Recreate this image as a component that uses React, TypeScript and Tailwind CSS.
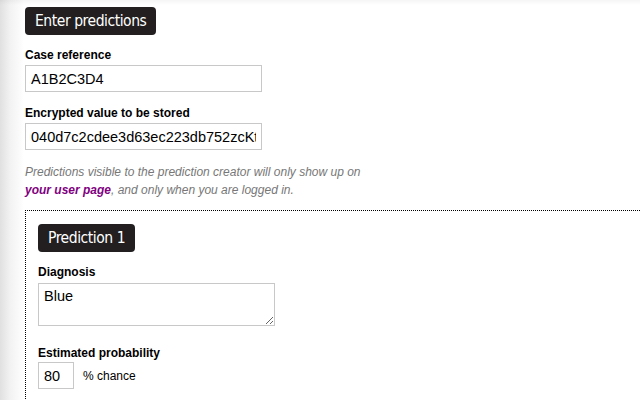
const body = { fontFamily: '"Liberation Sans", Arial, sans-serif' };
const head = { fontFamily: '"Trebuchet MS", "DejaVu Sans Condensed", "Liberation Sans Narrow", sans-serif' };

function Heading({ children }: { children: React.ReactNode }) {
    return (
        <div style={head} className="inline-flex h-[28px] items-center rounded-[4px] bg-[#231f20] px-[10px] pt-[1px] text-[15.5px] tracking-[-0.45px] text-white">
            {children}
        </div>
    );
}

function Label({ children }: { children: React.ReactNode }) {
    return <div className="text-[12px] font-bold leading-[14px] text-black">{children}</div>;
}

export default function App() {
    return (
        <div style={body} className="relative h-[400px] w-[640px] overflow-hidden bg-[linear-gradient(to_right,#e0e0e0,#f2f2f2_10px,#fff_24px)]">
            {/* faint top shadow */}
            <div className="pointer-events-none absolute inset-x-0 top-0 h-[5px] bg-[linear-gradient(to_bottom,rgba(0,0,0,0.04),rgba(0,0,0,0))]" />

            <div className="pl-[25px] pt-[7px]">
                <Heading>Enter predictions</Heading>

                <div className="mt-[13px]">
                    <Label>Case reference</Label>
                    <input
                        readOnly
                        value="A1B2C3D4"
                        style={body}
                        className="mt-[3px] block h-[27px] w-[237px] border border-[#c8c8c8] bg-white px-[5px] text-[14.5px] text-black outline-none"
                    />
                </div>

                <div className="mt-[14px]">
                    <Label>Encrypted value to be stored</Label>
                    <input
                        readOnly
                        value="040d7c2cdee3d63ec223db752zcKtq81f"
                        style={body}
                        className="mt-[3px] block h-[27px] w-[237px] border border-[#c8c8c8] bg-white px-[5px] text-[14.5px] text-black outline-none"
                    />
                </div>

                <p className="mt-[13px] text-[12px] italic leading-[18px] text-[#777]">
                    Predictions visible to the prediction creator will only show up on
                    <br />
                    <a href="#" className="font-bold text-[#800080]">your user page</a>, and only when you are logged in.
                </p>

                <div className="mt-[11px] border-l border-t border-dotted border-black pl-[12px] pt-[13px] pb-[40px]">
                    <Heading>Prediction 1</Heading>

                    <div className="mt-[13px]">
                        <Label>Diagnosis</Label>
                        <textarea
                            readOnly
                            value="Blue"
                            style={body}
                            className="mt-[4px] block h-[43px] w-[237px] resize border border-[#c8c8c8] bg-white px-[5px] py-[3px] text-[14.5px] leading-[18px] text-black outline-none"
                        />
                    </div>

                    <div className="mt-[20px]">
                        <Label>Estimated probability</Label>
                        <div className="mt-[2px] flex items-center">
                            <input
                                readOnly
                                value="80"
                                style={body}
                                className="block h-[27px] w-[36px] border border-[#c8c8c8] bg-white px-[5px] text-[14.5px] text-black outline-none"
                            />
                            <span className="ml-[9px] text-[12px] text-black">% chance</span>
                        </div>
                    </div>
                </div>
            </div>
        </div>
    );
}
